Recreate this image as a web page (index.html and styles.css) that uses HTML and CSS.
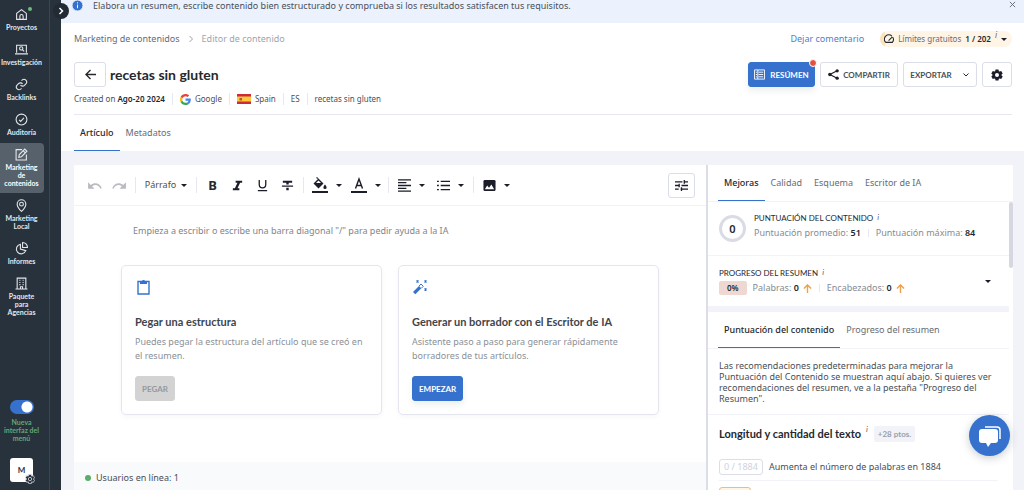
FILE: index.html
```html
<!DOCTYPE html>
<html lang="es">
<head>
<meta charset="utf-8">
<meta name="viewport" content="width=device-width, initial-scale=1">
<title>Editor de contenido</title>
<link rel="stylesheet" href="styles.css">
</head>
<body>
<div class="app">
  <aside class="sidebar">
    <nav class="nav">
      <a class="nav-item" href="#"><svg class="nav-icon" viewBox="0 0 24 24"><path d="M3 10l9-7 9 7v11H3z"/><path d="M9 21v-6a3 3 0 016 0v6"/></svg><span class="nav-dot"></span>Proyectos</a>
      <a class="nav-item" href="#"><svg class="nav-icon" viewBox="0 0 24 24"><path d="M3 18V4h18v14M0 20h24"/><circle cx="11.500" cy="10" r="3"/><path d="M14 12.500l3 3"/></svg>Investigación</a>
      <a class="nav-item" href="#"><svg class="nav-icon" viewBox="0 0 24 24"><path d="M10 13a5 5 0 007.500.5l3-3a5 5 0 00-7-7L12 5"/><path d="M14 11a5 5 0 00-7.500-.5l-3 3a5 5 0 007 7L12 19"/></svg>Backlinks</a>
      <a class="nav-item" href="#"><svg class="nav-icon" viewBox="0 0 24 24"><circle cx="12" cy="12" r="10"/><path d="M7.500 12.500l3 3 6-6.500"/></svg>Auditoría</a>
      <a class="nav-item active" href="#"><svg class="nav-icon" viewBox="0 0 24 24"><path d="M13 3H2v19h19V12"/><path d="M7 17l1-5L18 2l4 4-10 10zM15 5l4 4"/></svg><span class="nav-label">Marketing de contenidos</span></a>
      <a class="nav-item" href="#"><svg class="nav-icon" viewBox="0 0 24 24"><path d="M12 23S4 15 4 9.500a8 8 0 0116 0C20 15 12 23 12 23z"/><circle cx="12" cy="9.500" r="3.500"/></svg><span class="nav-label">Marketing Local</span></a>
      <a class="nav-item" href="#"><svg class="nav-icon" viewBox="0 0 24 24"><path d="M10 4a9 9 0 1010 12l-10-3z"/><path d="M14 1v9h9a9 9 0 00-9-9z"/></svg>Informes</a>
      <a class="nav-item" href="#"><svg class="nav-icon" viewBox="0 0 24 24"><path d="M4 22V2h16v20M1 22h22M10 22v-4h4v4"/><path d="M8 6h2m4 0h2M8 10h2m4 0h2M8 14h2m4 0h2"/></svg><span class="nav-label">Paquete para Agencias</span></a>
    </nav>
    <div class="nav-bottom">
      <label class="switch"><input type="checkbox" checked><span>Nueva interfaz del menú</span></label>
      <button class="avatar" type="button">M
        <svg class="avatar-gear" viewBox="0 0 24 24"><path d="M9 1h6l1 4 4-1 3 5-3 3 3 3-3 5-4-1-1 4H9l-1-4-4 1-3-5 3-3-3-3 3-5 4 1z"/><circle cx="12" cy="12" r="4"/></svg>
      </button>
    </div>
    <button class="expand" type="button" aria-label="Expandir"><svg viewBox="0 0 10 10"><path d="M3.500 2l3 3-3 3"/></svg></button>
  </aside>

  <main class="main">
    <div class="notice">
      <svg class="info" viewBox="0 0 12 12"><circle cx="6" cy="6" r="6"/><path d="M6 5v4M6 2.500v1.300"/></svg>
      <span>Elabora un resumen, escribe contenido bien estructurado y comprueba si los resultados satisfacen tus requisitos.</span>
      <button class="close" type="button" aria-label="Cerrar"><svg viewBox="0 0 8 8"><path d="M1 1l6 6M7 1L1 7"/></svg></button>
    </div>

    <header class="header">
      <div class="crumb-row">
        <a href="#">Marketing de contenidos</a>
        <svg class="crumb-sep" viewBox="0 0 6 6"><path d="M1.500 0l3 3-3 3"/></svg>
        <span class="current">Editor de contenido</span>
        <a class="comment" href="#">Dejar comentario</a>
        <button class="limits" type="button">
          <svg class="gauge" viewBox="0 0 12 12"><path d="M2 10a5 5 0 117.500-7.500M10.500 4A5 5 0 0110 10H2M5.500 8L10 3.500"/></svg>
          <span>Límites gratuitos</span><b>1 / 202</b><i class="hint">i</i><span class="caret"></span>
        </button>
      </div>
      <div class="title-row">
        <button class="btn back" type="button" aria-label="Volver"><svg viewBox="0 0 12 12"><path d="M12 6H1M6 1L1 6l5 5"/></svg></button>
        <h1>recetas sin gluten</h1>
        <div class="actions">
          <button class="btn primary resumen" type="button"><svg class="list-icon" viewBox="0 0 12 12"><path d="M.5 1h11v10H.500zM2 3.500h1.500M5 3.500h5M2 6h1.500M5 6h5M2 8.500h1.500M5 8.500h5M4.200 1v10"/></svg>RESÚMEN<span class="badge"></span></button>
          <button class="btn share" type="button"><svg class="share-icon" viewBox="0 0 12 12"><path d="M10 2L2 6l8 4" fill="none" stroke="#1b1d29" stroke-width="1.300"/><circle cx="10" cy="2" r="1.800"/><circle cx="2" cy="6" r="1.800"/><circle cx="10" cy="10" r="1.800"/></svg>COMPARTIR</button>
          <button class="btn export" type="button">EXPORTAR<svg class="chev" viewBox="0 0 8 8"><path d="M1.500 2.500L4 5l2.500-2.500"/></svg></button>
          <button class="btn gear" type="button" aria-label="Ajustes"><svg viewBox="0 0 24 24"><path fill-rule="evenodd" d="M9 1h6l.7 3.300 1.500.9 3.200-1.100 3 5.100-2.500 2.200v1.200l2.500 2.200-3 5.100-3.200-1.100-1.500.9L15 23H9l-.7-3.300-1.500-.9-3.200 1.100-3-5.100 2.500-2.200v-1.200L.600 9.200l3-5.100 3.200 1.100 1.500-.9zM12 8a4 4 0 100 8 4 4 0 000-8z"/></svg></button>
        </div>
      </div>
      <div class="meta">
        <span>Created on <b>Ago-20 2024</b></span>
        <span class="meta-cell"><svg class="google" viewBox="0 0 48 48"><path fill="#ea4335" d="M24 9.500c3.500 0 6.700 1.200 9.200 3.600l6.900-6.900C35.900 2.400 30.500 0 24 0 14.600 0 6.500 5.400 2.600 13.200l8 6.200C12.400 13.700 17.700 9.500 24 9.500z"/><path fill="#4285f4" d="M47 24.600c0-1.600-.2-3.100-.4-4.600H24v9h12.900c-.6 3-2.200 5.500-4.700 7.200l7.700 6C44.400 38 47 31.800 47 24.600z"/><path fill="#fbbc05" d="M10.500 28.600a14 14 0 010-9.200l-8-6.200a24 24 0 000 21.600z"/><path fill="#34a853" d="M24 48c6.500 0 11.900-2.100 15.900-5.800l-7.700-6c-2.200 1.500-4.900 2.300-8.200 2.300-6.300 0-11.600-4.200-13.500-9.900l-8 6.200C6.500 42.600 14.600 48 24 48z"/></svg>Google</span>
        <span class="meta-cell"><svg class="flag" viewBox="0 0 14 10"><path fill="#cf2b36" d="M0 0h14v10H0z"/><path fill="#ffc93c" d="M0 2.500h14v5H0z"/><path fill="#b5553c" d="M2.500 4h2.500v2.500H2.500z"/></svg>Spain</span>
        <span class="meta-cell">ES</span>
        <span class="meta-cell">recetas sin gluten</span>
      </div>
      <nav class="tabs page-tabs"><a class="tab on" href="#">Artículo</a><a class="tab" href="#">Metadatos</a></nav>
    </header>

    <div class="workspace">
      <section class="editor">
        <div class="toolbar">
          <button class="tool" type="button" aria-label="Deshacer"><svg class="muted" viewBox="0 0 14 14"><path d="M1 4v6h6L4.800 7.800C7.500 5.500 11 6.500 12.500 10l1.300-.5C12 4.500 7 3.500 3.500 6.500z"/></svg></button>
          <button class="tool" type="button" aria-label="Rehacer"><svg class="muted" viewBox="0 0 14 14"><path d="M13 4v6H7l2.200-2.200C6.500 5.500 3 6.500 1.500 10L.200 9.500C2 4.500 7 3.500 10.500 6.500z"/></svg></button>
          <span class="rule"></span>
          <button class="tool paragraph" type="button">Párrafo<span class="caret"></span></button>
          <span class="rule"></span>
          <button class="tool letter" type="button"><b>B</b></button>
          <button class="tool" type="button" aria-label="Cursiva"><svg viewBox="0 0 14 14"><path d="M5 2h7v2H9.800L7 10h2v2H2v-2h2.200L7 4H5z"/></svg></button>
          <button class="tool" type="button" aria-label="Subrayado"><svg viewBox="0 0 14 14"><path class="line" d="M3.500 1v5a3.500 3.500 0 007 0V1M2 12.500h10"/></svg></button>
          <button class="tool" type="button" aria-label="Tachado"><svg viewBox="0 0 14 14"><path d="M2 2h10v2H8.300v2H5.700V4H2zM1 7h12v1.400H1zM5.700 9.500h2.600V12H5.700z"/></svg></button>
          <span class="rule"></span>
          <button class="tool wide" type="button" aria-label="Relleno"><svg class="tall" viewBox="0 0 16 16"><path d="M5 0l6.500 6.500L6.500 11.500 1.500 6.500 6 2 4 .9zM13 7.500s1.600 1.900 1.600 2.900a1.600 1.600 0 01-3.200 0c0-1 1.600-2.900 1.600-2.900zM0 14h16v2H0z"/><path d="M4 6h5L6.500 3.600z" fill="#fff"/></svg><span class="caret"></span></button>
          <button class="tool wide" type="button" aria-label="Color del texto"><svg class="tall" viewBox="0 0 16 16"><path class="line" d="M4.500 11.500L8 2l3.500 9.500M5.500 8.500h5"/><path d="M0 14h16v2H0z"/></svg><span class="caret"></span></button>
          <span class="rule"></span>
          <button class="tool wide" type="button" aria-label="Alinear"><svg viewBox="0 0 14 14"><path class="line" d="M0 1h14M0 4h9M0 7h14M0 10h9M0 13h14"/></svg><span class="caret"></span></button>
          <button class="tool wide" type="button" aria-label="Lista"><svg viewBox="0 0 14 14"><path class="line" d="M4 2.500h10M4 7h10M4 11.500h10M0 2.500h2M0 7h2M0 11.500h2"/></svg><span class="caret"></span></button>
          <span class="rule"></span>
          <button class="tool wide" type="button" aria-label="Imagen"><svg viewBox="0 0 14 14"><rect x=".5" y="1" width="13" height="12" rx="1.500"/><path d="M2 11l2.500-4 2 2.500 2.500-3.500 3 5z" fill="#fff"/></svg><span class="caret"></span></button>
          <button class="btn tune" type="button" aria-label="Opciones"><svg viewBox="0 0 14 14"><path class="line" d="M0 3h8M10 3h4M10 1v4M0 7h5M7 7h7M4.500 5v4M0 11h4M6 11h8M7 9v4"/></svg></button>
        </div>
        <div class="canvas">
          <p class="placeholder">Empieza a escribir o escribe una barra diagonal "/" para pedir ayuda a la IA</p>
          <div class="cards">
            <article class="card">
              <svg class="card-icon" viewBox="0 0 16 16"><path d="M3 2.500h11v12.500H3z" fill="none" stroke="#3672cd" stroke-width="1.400"/><path d="M5 2H7a1.600 1.600 0 013 0h2v3H5z" fill="#3672cd"/></svg>
              <h2>Pegar una estructura</h2>
              <p>Puedes pegar la estructura del artículo que se creó en el resumen.</p>
              <button class="btn cta off" type="button" disabled>PEGAR</button>
            </article>
            <article class="card">
              <svg class="card-icon" viewBox="0 0 16 16"><path d="M1 13l6-6 2.300 2.300-6 6z" fill="#3672cd"/><path d="M7 7l2-2 2.300 2.300-2 2" fill="none" stroke="#3672cd"/><path d="M4.500 1.500l2 2m0-2l-2 2M12.500 1.500l2 2m0-2l-2 2M12.500 9.500l2 2m0-2l-2 2" stroke="#3672cd" stroke-width="1.200"/></svg>
              <h2>Generar un borrador con el Escritor de IA</h2>
              <p>Asistente paso a paso para generar rápidamente borradores de tus artículos.</p>
              <button class="btn cta primary" type="button">EMPEZAR</button>
            </article>
          </div>
        </div>
        <footer class="online"><span class="online-dot"></span>Usuarios en línea: 1</footer>
      </section>

      <aside class="panel">
        <nav class="tabs panel-tabs"><a class="tab on" href="#">Mejoras</a><a class="tab" href="#">Calidad</a><a class="tab" href="#">Esquema</a><a class="tab" href="#">Escritor de IA</a></nav>
        <div class="panel-body">
          <div class="panel-content">
            <section class="score">
              <div class="ring">0</div>
              <div>
                <h3>PUNTUACIÓN DEL CONTENIDO <i class="hint">i</i></h3>
                <p class="stats"><span>Puntuación promedio: <b>51</b></span><span class="stat-rule"></span><span>Puntuación máxima: <b>84</b></span></p>
              </div>
            </section>
            <section class="progress">
              <div>
                <h3>PROGRESO DEL RESUMEN <i class="hint">i</i></h3>
                <p class="stats"><span class="percent">0%</span><span>Palabras: <b>0</b></span><svg class="up" viewBox="0 0 10 10"><path d="M5 10V1M1 5l4-4 4 4"/></svg><span class="stat-rule"></span><span>Encabezados: <b>0</b></span><svg class="up" viewBox="0 0 10 10"><path d="M5 10V1M1 5l4-4 4 4"/></svg></p>
              </div>
              <span class="caret"></span>
            </section>
            <nav class="tabs sub-tabs"><a class="tab on" href="#">Puntuación del contenido</a><a class="tab" href="#">Progreso del resumen</a></nav>
            <p class="advice">Las recomendaciones predeterminadas para mejorar la Puntuación del Contenido se muestran aquí abajo. Si quieres ver recomendaciones del resumen, ve a la pestaña "Progreso del Resumen".</p>
            <section class="length">
              <h2>Longitud y cantidad del texto <i class="hint">i</i><span class="points">+28 ptos.</span></h2>
              <p class="task"><span class="count">0 / 1884</span>Aumenta el número de palabras en 1884</p>
              <div class="next"><span class="next-count"></span></div>
            </section>
          </div>
          <div class="scroll"><span class="thumb"></span></div>
        </div>
      </aside>
    </div>
  </main>
  <button class="chat" type="button" aria-label="Chat"><svg viewBox="0 0 24 24"><path d="M7 3h12a3 3 0 013 3v9" fill="none" stroke="#fff" stroke-width="1.500"/><path d="M4 5h13a3 3 0 013 3v8a3 3 0 01-3 3h-4l-3 4-2-4H4a3 3 0 01-3-3V8a3 3 0 013-3z" fill="#fff"/></svg></button>
</div>
</body>
</html>
```

FILE: styles.css
```css
* { box-sizing: border-box; }
body {
  margin: 0;
  font: 9px/14px "Noto Sans", "Open Sans", sans-serif;
  color: #4a4f56;
  background: #f2f3f8;
}
h1, h2, h3, p { margin: 0; }
a { color: inherit; text-decoration: none; }
button { font: inherit; color: inherit; border: 0; background: none; padding: 0; }
svg { display: block; flex: none; }
b { color: #25282e; font-weight: 600; }
.app { display: flex; height: 100vh; overflow: hidden; }

.sidebar {
  position: relative;
  flex: none;
  width: 61px;
  padding-right: 11px;
  display: flex;
  flex-direction: column;
  justify-content: space-between;
  background: linear-gradient(90deg, #28323c 49px, #3c4650 49px, #3c4650 50px, #28323c 50px);
  color: #e4e8eb;
  font-family: Lato, sans-serif;
  font-weight: 700;
  font-size: 7px;
  line-height: 8px;
  text-align: center;
}
.nav { display: flex; flex-direction: column; gap: 1px; padding: 3px 6px 0 0; }
.nav-item {
  position: relative;
  display: flex;
  flex-direction: column;
  align-items: center;
  gap: 2px;
  padding: 5px 1px 6px 0;
  border-radius: 0 4px 4px 0;
}
.nav-item.active { background: #56616c; color: #fff; }
.nav-label { max-width: 38px; }
.nav-icon { width: 13px; height: 13px; fill: none; stroke: #e4e8eb; stroke-width: 2; }
.nav-dot { position: absolute; top: 4px; left: 28px; width: 4px; height: 4px; border-radius: 50%; background: #6dbb7c; }
.nav-bottom { display: flex; flex-direction: column; align-items: center; gap: 16px; padding: 0 7px 8px 0; }
.switch { display: flex; flex-direction: column; align-items: center; gap: 4px; color: #61a876; }
.switch input {
  appearance: none;
  width: 24px;
  height: 14px;
  margin: 0;
  border-radius: 7px;
  background: radial-gradient(circle at 17px 7px, #fff 5px, #3672cd 6px);
}
.avatar { position: relative; width: 23px; height: 24px; border-radius: 3px; background: #fff; color: #28323c; font-size: 8px; }
.avatar-gear { position: absolute; right: -2px; bottom: -2px; width: 10px; height: 10px; fill: #28323c; stroke: #cfd4d9; stroke-width: 2; }
.expand {
  position: absolute;
  top: 3px;
  right: -8px;
  width: 16px;
  height: 16px;
  display: grid;
  place-items: center;
  border-radius: 50%;
  background: #222b34;
}
.expand svg { width: 10px; fill: none; stroke: #fff; stroke-width: 1.5; }

.main { flex: 1; min-width: 0; display: flex; flex-direction: column; }
.notice { display: flex; gap: 10px; height: 23px; padding: 0 8px 0 11px; background: #ebf2fe; }
.notice span { flex: 1; line-height: 12px; }
.info { width: 11px; height: 11px; fill: #3672cd; stroke: #fff; }
.close { height: 8px; }
.close svg { width: 7px; fill: none; stroke: #59626c; }

.header { padding: 8px 12px 0 13px; background: #fff; }
.crumb-row { display: flex; align-items: center; height: 16px; color: #666c74; }
.crumb-sep { width: 6px; margin: 0 8px; fill: none; stroke: #9da2a8; }
.current { color: #a0a5ac; }
.comment { margin-left: auto; color: #5080cb; }
.limits {
  display: flex;
  align-items: center;
  gap: 4px;
  height: 16px;
  margin-left: 16px;
  padding: 0 5px 0 4px;
  border-radius: 8px;
  background: linear-gradient(90deg, #fbe3bb 5px, #fef5e6 5px);
  font-size: 8px;
}
.gauge { width: 10px; fill: none; stroke: #25282e; stroke-width: 1.3; }
.caret { flex: none; border: 3px solid transparent; border-top-color: #1b1d29; border-bottom: 0; }
.hint { font-size: 8px; line-height: 8px; font-weight: 400; color: #59626c; align-self: flex-start; }
.title-row { display: flex; align-items: center; gap: 4px; margin-top: 15px; }
h1 { font-family: Lato, sans-serif; font-size: 14px; line-height: 20px; color: #25282e; }
.btn {
  display: flex;
  align-items: center;
  justify-content: center;
  height: 25px;
  border: 1px solid #dbdde8;
  border-radius: 3px;
  background: #fff;
  font-family: Lato, sans-serif;
  font-size: 8px;
  font-weight: 700;
}
.back { width: 32px; }
.back svg { width: 11px; fill: none; stroke: #25282e; stroke-width: 1.5; }
.actions { display: flex; gap: 5px; margin-left: auto; }
.btn.primary { border-color: #3672cd; background: #3672cd; color: #fff; box-shadow: 0 4px 6px #28324014; }
.resumen { position: relative; width: 67px; gap: 5px; }
.list-icon { width: 11px; fill: none; stroke: #fff; }
.badge { position: absolute; top: -4px; right: -3px; width: 8px; height: 8px; border: 1px solid #fff; border-radius: 50%; background: #e2503f; }
.share { width: 78px; gap: 4px; }
.share-icon { width: 11px; fill: #1b1d29; }
.export { width: 74px; gap: 10px; }
.chev { width: 8px; fill: none; stroke: #25282e; }
.gear { width: 30px; }
.gear svg { width: 12px; fill: #1b1d29; }
.meta { display: flex; align-items: center; height: 28px; font-size: 8px; border-bottom: 1px solid #e6e7f1; padding-bottom: 3px; }
.meta-cell { display: flex; align-items: center; gap: 4px; margin-left: 7px; padding-left: 7px; border-left: 1px solid #e6e7f1; line-height: 12px; }
.google { width: 11px; }
.flag { width: 14px; }

.tabs { display: flex; color: #666c74; }
.tab { display: flex; align-items: center; padding: 0 6px; border-bottom: 1px solid transparent; }
.tab.on { color: #25282e; border-color: #3672cd; font-weight: 500; }
.page-tabs { height: 36px; }

.workspace { flex: 1; min-height: 0; display: flex; padding: 14px 11px 0 13px; }
.editor { flex: 1; min-width: 0; display: flex; flex-direction: column; background: #fff; }
.toolbar { display: flex; align-items: center; height: 41px; padding: 0 11px 0 8px; border-bottom: 1px solid #f2f3f8; }
.tool { display: flex; align-items: center; justify-content: center; gap: 8px; width: 25px; height: 24px; }
.tool svg, .tune svg { width: 13px; fill: #1b1d29; }
.tool svg.tall { width: 16px; }
.tool svg.muted { fill: #b8bbc1; width: 15px; }
.line { fill: none; stroke: #1b1d29; stroke-width: 1.4; }
.rule { width: 1px; height: 16px; margin: 0 3px; background: #e6e7f1; }
.paragraph { width: 54px; gap: 5px; }
.letter { font-size: 13px; }
.letter b { font-weight: 700; }
.wide { width: 39px; }
.tune { width: 27px; margin-left: auto; }
.canvas { flex: 1; padding: 18px 47px 0; }
.placeholder { padding-left: 12px; color: #80858c; }
.cards { display: grid; grid-template-columns: 1fr 1fr; gap: 16px; margin-top: 27px; }
.card { padding: 13px; border: 1px solid #e4e5ef; border-radius: 5px; box-shadow: 0 2px 4px #2832400a; }
.card-icon { width: 16px; height: 16px; }
.card h2 { margin-top: 19px; font-family: Lato, sans-serif; font-size: 11px; line-height: 16px; color: #3f444b; }
.card p { margin-top: 5px; color: #8b9097; }
.cta { margin-top: 13px; padding: 0 6px; }
.cta.off { background: #d3d3d3; border-color: #d3d3d3; color: #96989b; }
.online { display: flex; align-items: center; gap: 5px; height: 28px; padding: 3px 11px 0; background: #f9fafc; }
.online-dot { width: 6px; height: 6px; border-radius: 50%; background: #5aad6a; }

.panel { flex: none; width: 307px; display: flex; flex-direction: column; border-left: 2px solid #dbdde8; background: #fff; }
.panel-tabs { flex: none; height: 37px; padding-left: 10px; border-bottom: 1px solid #f2f3f8; }
.panel-body { flex: 1; min-height: 0; display: flex; }
.panel-content { flex: 1; min-width: 0; overflow: hidden; }
.scroll { width: 4px; }
.thumb { display: block; height: 66px; border-radius: 2px; background: #d5d8e0; }
.score { display: flex; gap: 8px; height: 54px; padding: 9px 11px; border-bottom: 1px solid #f2f3f8; }
.ring { width: 27px; height: 27px; margin-top: 4px; display: grid; place-items: center; border: 3px solid #d9dce5; border-radius: 50%; color: #25282e; font-size: 11px; font-weight: 600; }
h3 { font-family: Lato, sans-serif; font-size: 8px; line-height: 14px; font-weight: 400; color: #25282e; }
h3 .hint, h2 .hint { margin-left: 2px; }
h3 .hint { vertical-align: 1px; }
.stats { display: flex; align-items: center; gap: 4px; height: 16px; color: #858b93; }
.stat-rule { width: 1px; height: 8px; margin: 0 3px; background: #e6e7f1; }
.progress { display: flex; align-items: center; justify-content: space-between; height: 56px; padding: 0 18px 0 11px; border-bottom: 6px solid #f2f3f8; }
.percent { padding: 0 8px; margin-right: 2px; border-radius: 2px; background: #f0d8d2; color: #25282e; font-size: 8px; font-weight: 600; }
.up { width: 9px; fill: none; stroke: #eda04b; stroke-width: 1.5; }
.sub-tabs { height: 37px; padding-left: 10px; border-bottom: 1px solid #f2f3f8; }
.advice { padding: 11px 11px 10px; line-height: 11px; border-bottom: 1px solid #f2f3f8; }
.length { padding: 10px 11px 0; }
.length h2 { display: flex; align-items: center; gap: 3px; font-family: Lato, sans-serif; font-size: 11px; line-height: 18px; color: #25282e; }
.points { margin-left: 3px; padding: 0 4px; border-radius: 2px; background: #f2f3f8; color: #9a9fa7; font-size: 8px; line-height: 16px; }
.task { display: flex; align-items: center; gap: 6px; height: 26px; margin-top: 11px; }
.count { width: 44px; border: 1px solid #dbdde8; border-radius: 3px; color: #cfd2dc; text-align: center; }
.next { padding-top: 6px; border-top: 1px solid #f2f3f8; }
.next-count { display: block; width: 32px; height: 16px; border: 1px solid #f0bd76; border-radius: 3px; background: #fef5e6; }
.chat { position: absolute; right: 14px; bottom: 34px; width: 41px; height: 41px; display: grid; place-items: center; border-radius: 50%; background: #3672cd; box-shadow: 0 2px 8px #28324040; }
.chat svg { width: 24px; }
```
